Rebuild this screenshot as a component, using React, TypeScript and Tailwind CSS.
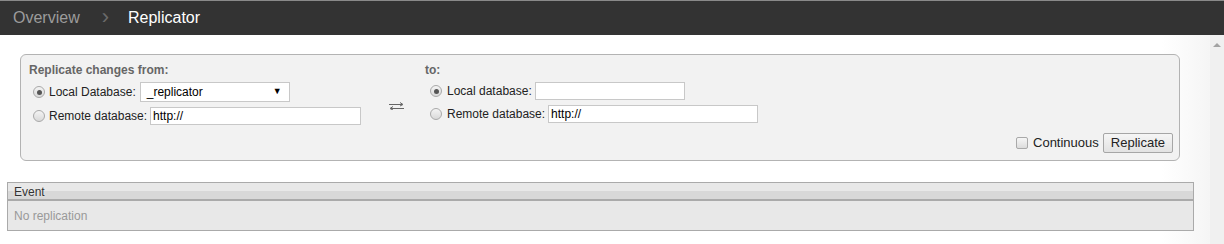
function Radio({ checked }: { checked?: boolean }) {
  return (
    <span className="w-[12px] h-[12px] rounded-full border border-[#a9a9a9] bg-[linear-gradient(#f4f4f4,#d9d9d9)] flex items-center justify-center shrink-0">
      {checked && <span className="w-[5px] h-[5px] rounded-full bg-[#555]" />}
    </span>
  );
}

function SwapIcon() {
  return (
    <svg width="15" height="8" viewBox="0 0 15 8" className="text-[#666]">
      <path d="M0 2.5H13" stroke="currentColor" strokeWidth="1" />
      <path d="M11 0.5L14 2.5L11 4" fill="none" stroke="currentColor" strokeWidth="1" />
      <path d="M2 6.5H15" stroke="currentColor" strokeWidth="1" />
      <path d="M4 4.5L1 6.5L4 8" fill="none" stroke="currentColor" strokeWidth="1" />
    </svg>
  );
}

function TextBox({ value, w }: { value?: string; w: string }) {
  return (
    <div className={`${w} h-[18px] bg-white border border-[#c8c8c8] px-[2px] text-[12px] leading-[16px] text-black`}>
      {value}
    </div>
  );
}

export default function App() {
  return (
    <div className="w-[1224px] h-[244px] overflow-hidden bg-white font-['Liberation_Sans',Arial,sans-serif]">
      {/* Breadcrumb bar */}
      <div className="h-[35px] border-t border-[#8a8a8a] bg-[#333] flex items-center text-[16px] pl-[13px]">
        <span className="text-[#9c9c9c]">Overview</span>
        <span className="text-[#6a6a6a] text-[22px] leading-[22px] ml-[22px] mr-[19px] -mt-[2px]">›</span>
        <span className="text-white">Replicator</span>
      </div>

      <div className="flex h-[209px]">
        <div className="flex-1 bg-[linear-gradient(to_right,#ffffff_96%,#f5f5f5)] pl-[7px] pr-[16px]">
          {/* Replication form */}
          <div className="mt-[19px] ml-[13px] mr-[14px] h-[107px] rounded-[6px] border border-[#b3b3b3] bg-[#f2f2f2] pt-[7px] pl-[8px] pr-[6px] pb-[7px] flex flex-col">
            <div className="flex">
              <div className="w-[333px] flex flex-col">
                <div className="text-[12px] leading-[16px] font-bold text-[#666]">Replicate changes from:</div>
                <div className="flex items-center mt-[4px] pl-[4px] h-[20px]">
                  <Radio checked />
                  <span className="ml-[4px] text-[12px] text-[#222]">Local Database:</span>
                  <div className="ml-[4px] w-[150px] h-[20px] bg-white border border-[#c8c8c8] flex items-center justify-between pl-[6px] pr-[7px] text-[12px] text-black">
                    <span>_replicator</span>
                    <span className="text-[9px]">▼</span>
                  </div>
                </div>
                <div className="flex items-center mt-[5px] pl-[4px] h-[18px]">
                  <Radio />
                  <span className="ml-[4px] text-[12px] text-[#222]">Remote database:</span>
                  <div className="ml-[3px]">
                    <TextBox value="http://" w="w-[211px]" />
                  </div>
                </div>
              </div>

              <div className="ml-[27px] mt-[40px] self-start">
                <SwapIcon />
              </div>

              <div className="ml-[21px] flex flex-col">
                <div className="text-[12px] leading-[16px] font-bold text-[#666]">to:</div>
                <div className="flex items-center mt-[4px] pl-[5px] h-[18px]">
                  <Radio checked />
                  <span className="ml-[5px] text-[12px] text-[#222]">Local database:</span>
                  <div className="ml-[3px]">
                    <TextBox w="w-[150px]" />
                  </div>
                </div>
                <div className="flex items-center mt-[5px] pl-[5px] h-[18px]">
                  <Radio />
                  <span className="ml-[5px] text-[12px] text-[#222]">Remote database:</span>
                  <div className="ml-[3px]">
                    <TextBox value="http://" w="w-[210px]" />
                  </div>
                </div>
              </div>
            </div>

            <div className="mt-auto flex items-center justify-end">
              <span className="w-[12px] h-[12px] rounded-[2px] border border-[#a9a9a9] bg-[linear-gradient(#f6f6f6,#dcdcdc)]" />
              <span className="ml-[5px] text-[13px] text-[#222]">Continuous</span>
              <button className="ml-[4px] h-[20px] px-[7px] border border-[#a6a6a6] rounded-[2px] bg-[linear-gradient(#f6f6f6,#e2e2e2)] text-[13px] leading-[18px] text-[#222]">
                Replicate
              </button>
            </div>
          </div>

          {/* Events table */}
          <div className="mt-[21px] border border-[#aaa]">
            <div className="h-[18px] bg-[linear-gradient(#e8e8e8_50%,#d8d8d8_50%)] border-b-2 border-[#aaa] pl-[6px] text-[12px] leading-[18px] text-[#333] [text-shadow:0_0_2px_#f4f4f4]">
              Event
            </div>
            <div className="h-[29px] bg-[#e8e8e8] pl-[6px] flex items-center text-[12px] text-[#999]">
              No replication
            </div>
          </div>
        </div>

        {/* Scrollbar */}
        <div className="w-[14px] bg-[#f0f0f0] flex justify-center pt-[8px]">
          <span className="w-0 h-0 border-l-[4px] border-r-[4px] border-b-[4px] border-l-transparent border-r-transparent border-b-[#a3a3a3]" />
        </div>
      </div>
    </div>
  );
}
